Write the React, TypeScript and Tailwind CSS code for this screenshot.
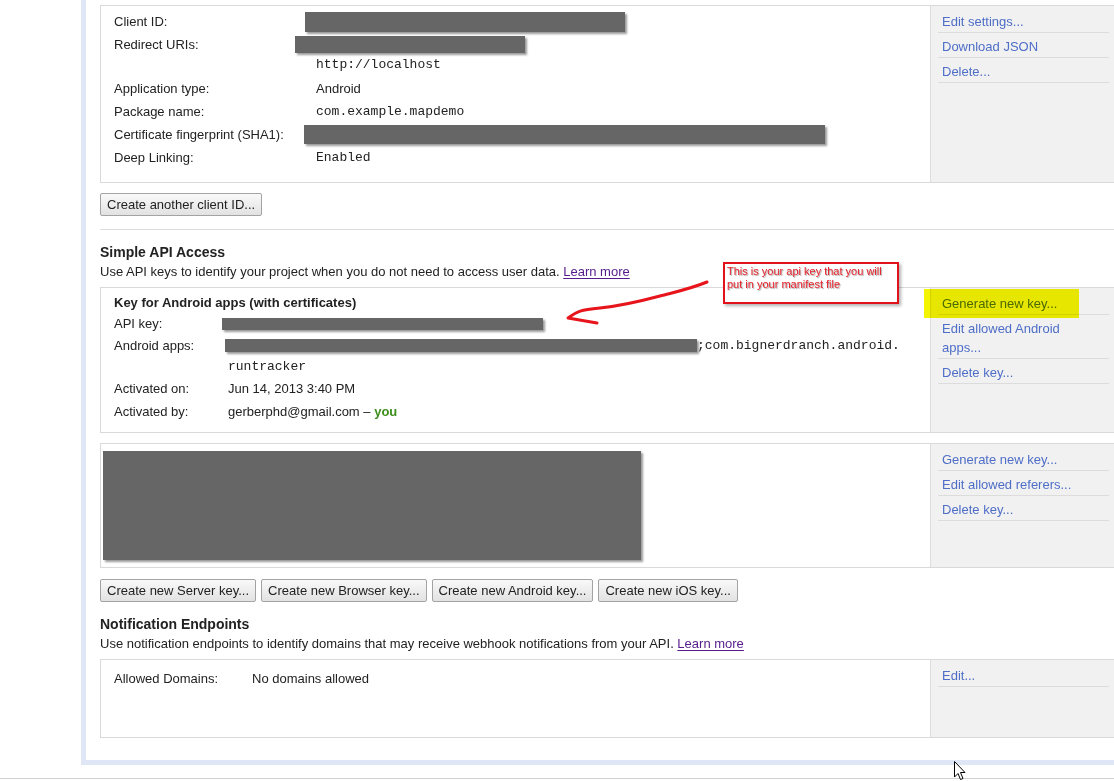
import React from 'react';

const mono = "font-['Liberation_Mono','Courier_New',monospace]";

function Redacted({ className }: { className: string }) {
  return (
    <span
      className={`shrink-0 bg-[#666] shadow-[2px_2px_2px_rgba(0,0,0,0.4)] ${className}`}
    />
  );
}

function SideLinks({ links }: { links: React.ReactNode[] }) {
  return (
    <div className="w-[186px] shrink-0 border-l border-[#dcdcdc] bg-[#f1f1f1] px-[7px] pt-[2px]">
      {links.map((l, i) => (
        <div
          key={i}
          className="border-b border-[#dcdcdc] pb-[1px] pl-[4px] pt-[4px] leading-[19px] text-[#4e6ec7]"
        >
          {l}
        </div>
      ))}
    </div>
  );
}

function Box({
  links,
  children,
  className = '',
}: {
  links: React.ReactNode[];
  children: React.ReactNode;
  className?: string;
}) {
  return (
    <div className="flex w-[1018px] border border-[#d9d9d9]">
      <div className={`w-[829px] shrink-0 ${className}`}>{children}</div>
      <SideLinks links={links} />
    </div>
  );
}

function Row({
  label,
  width,
  className = 'h-[23px] items-center',
  children,
}: {
  label?: string;
  width: string;
  className?: string;
  children?: React.ReactNode;
}) {
  return (
    <div className={`flex ${className}`}>
      <div className={`shrink-0 ${width}`}>{label}</div>
      <div className="flex items-center whitespace-nowrap">{children}</div>
    </div>
  );
}

function Button({ children }: { children: React.ReactNode }) {
  return (
    <button className="h-[23px] whitespace-nowrap rounded-[2px] border border-[#a3a3a3] bg-gradient-to-b from-[#f9f9f9] to-[#e2e2e2] px-[6px] text-[13px] leading-[20px] text-[#222]">
      {children}
    </button>
  );
}

function LearnMore() {
  return <a className="text-[#551a8b] underline underline-offset-2">Learn more</a>;
}

export default function App() {
  return (
    <div className="relative h-[781px] w-[1114px] overflow-hidden bg-white font-['Liberation_Sans',Arial,sans-serif] text-[13px] text-[#222]">
      <div className="ml-[81px] w-[1080px] border-b-[5px] border-l-[5px] border-[#dfe6f6] pb-[22px] pl-[14px] pt-[5px]">
        <Box
          className="pb-[13px] pl-[13px] pt-[4px]"
          links={['Edit settings...', 'Download JSON', 'Delete...']}
        >
          <Row label="Client ID:" width="w-[202px]">
            <Redacted className="ml-[-11px] h-[20px] w-[320px]" />
          </Row>
          <Row label="Redirect URIs:" width="w-[202px]">
            <Redacted className="ml-[-21px] h-[17px] w-[230px]" />
          </Row>
          <Row width="w-[202px]" className="h-[21px] items-start pt-[1px] leading-[15px]">
            <span className={mono}>http://localhost</span>
          </Row>
          <Row label="Application type:" width="w-[202px]">
            Android
          </Row>
          <Row label="Package name:" width="w-[202px]">
            <span className={mono}>com.example.mapdemo</span>
          </Row>
          <Row label="Certificate fingerprint (SHA1):" width="w-[202px]">
            <Redacted className="ml-[-12px] h-[19px] w-[521px]" />
          </Row>
          <Row label="Deep Linking:" width="w-[202px]">
            <span className={mono}>Enabled</span>
          </Row>
        </Box>

        <div className="mt-[10px]">
          <Button>Create another client ID...</Button>
        </div>

        <div className="mt-[13px] h-px w-[1018px] bg-[#dcdcdc]" />

        <h2 className="mt-[13px] text-[14px] font-bold leading-[18px]">Simple API Access</h2>
        <p className="mt-[2px] leading-[18px]">
          Use API keys to identify your project when you do not need to access user data.{' '}
          <LearnMore />
        </p>

        <div className="mt-[6px]">
          <Box
            className="pb-[8px] pl-[13px] pt-[4px]"
            links={[
              'Generate new key...',
              <>
                Edit allowed Android
                <br />
                apps...
              </>,
              'Delete key...',
            ]}
          >
            <div className="flex h-[22px] items-center font-bold">
              Key for Android apps (with certificates)
            </div>
            <Row label="API key:" width="w-[114px]" className="h-[20px] items-center">
              <Redacted className="ml-[-6px] h-[12px] w-[321px]" />
            </Row>
            <Row label="Android apps:" width="w-[114px]">
              <Redacted className="ml-[-3px] h-[13px] w-[472px]" />
              <span className={mono}>;com.bignerdranch.android.</span>
            </Row>
            <Row width="w-[114px]" className="h-[20px] items-center">
              <span className={mono}>runtracker</span>
            </Row>
            <Row label="Activated on:" width="w-[114px]">
              Jun 14, 2013 3:40 PM
            </Row>
            <Row label="Activated by:" width="w-[114px]" className="h-[24px] items-center">
              gerberphd@gmail.com –&nbsp;<b className="text-[#3d8f1b]">you</b>
            </Row>
          </Box>
        </div>

        <div className="mt-[10px]">
          <Box
            className="flex pb-[7px] pl-[2px] pt-[7px]"
            links={['Generate new key...', 'Edit allowed referers...', 'Delete key...']}
          >
            <Redacted className="h-[109px] w-[538px]" />
          </Box>
        </div>

        <div className="mt-[11px] flex gap-[5px]">
          <Button>Create new Server key...</Button>
          <Button>Create new Browser key...</Button>
          <Button>Create new Android key...</Button>
          <Button>Create new iOS key...</Button>
        </div>

        <h2 className="mt-[13px] text-[14px] font-bold leading-[18px]">Notification Endpoints</h2>
        <p className="mt-[2px] leading-[18px]">
          Use notification endpoints to identify domains that may receive webhook notifications from
          your API. <LearnMore />
        </p>

        <div className="mt-[6px]">
          <Box className="h-[77px] pl-[13px] pt-[7px]" links={['Edit...']}>
            <Row label="Allowed Domains:" width="w-[138px]">
              No domains allowed
            </Row>
          </Box>
        </div>
      </div>

      <div className="mt-[13px] h-px w-full bg-[#d0d0d0]" />

      {/* highlighter over the first side link */}
      <div className="absolute left-[924px] top-[289px] h-[29px] w-[155px] bg-[#f4f400] mix-blend-multiply" />

      {/* hand-drawn note */}
      <div className="absolute left-[723px] top-[262px] h-[42px] w-[176px] border-2 border-[#e2121b] bg-white pl-[2px] pt-[1px] shadow-[2px_2px_3px_rgba(0,0,0,0.3)]">
        <p className="w-[164px] text-[11px] leading-[13px] text-[#e8202a] [text-shadow:1px_1px_1px_rgba(0,0,0,0.35)]">
          This is your api key that you will put in your manifest file
        </p>
      </div>
      <svg
        className="absolute left-[560px] top-[275px]"
        width="155"
        height="55"
        viewBox="0 0 155 55"
        fill="none"
      >
        <path
          d="M147 7 C130 14 115 17 100 21 S60 31 40 33 S18 36 8 43 L37 48"
          stroke="#e8141c"
          strokeWidth="3"
          strokeLinecap="round"
          strokeLinejoin="round"
        />
      </svg>

      {/* mouse pointer */}
      <svg className="absolute left-[954px] top-[761px]" width="13" height="20" viewBox="0 0 13 20">
        <path
          d="M0.5 0.5 L0.5 16 L4 12.5 L6.5 18.5 L9 17.5 L6.5 11.5 L11 11.5 Z"
          fill="white"
          stroke="black"
          strokeWidth="1"
        />
      </svg>
    </div>
  );
}
